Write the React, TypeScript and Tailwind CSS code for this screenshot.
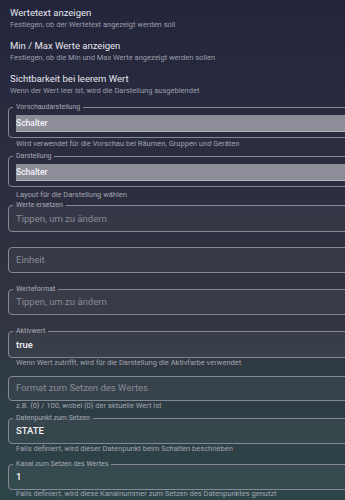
import React from "react";

function Setting({ title, sub }: { title: string; sub: string }) {
  return (
    <div className="h-[33px]">
      <div className="text-[9.5px] leading-[13px] text-[#e6e6ec]">{title}</div>
      <div className="text-[7.5px] leading-[12px] text-[#9c9eab]">{sub}</div>
    </div>
  );
}

function Legend({ children }: { children: React.ReactNode }) {
  return (
    <legend className="ml-[-3px] px-[3px] text-[7px] leading-[9px] text-[#a9abb7]">
      {children}
    </legend>
  );
}

function SelectField({ legend, value, cls }: { legend: string; value: string; cls: string }) {
  return (
    <fieldset className={`w-[360px] rounded-[4px] border border-[#858897] pl-[7px] pt-[3px] pb-[5px] ${cls}`}>
      <Legend>{legend}</Legend>
      <div className="h-[17px] bg-[#8d8d99] border-b border-[#b4b4bd] text-[8.5px] leading-[16px] font-medium text-[#f4f4f7]">
        {value}
      </div>
    </fieldset>
  );
}

function TextField({
  legend,
  value,
  placeholder,
  cls,
}: {
  legend: string;
  value?: string;
  placeholder?: string;
  cls: string;
}) {
  return (
    <fieldset className={`w-[360px] rounded-[4px] border border-[#858897] bg-white/[0.04] pl-[7px] pt-[2.5px] pb-[6px] ${cls}`}>
      <Legend>{legend}</Legend>
      {value ? (
        <div className="text-[9.5px] leading-[12px] font-medium text-[#f2f2f5]">{value}</div>
      ) : (
        <div className="text-[9.5px] leading-[12px] text-[#8a8c98]">{placeholder}</div>
      )}
    </fieldset>
  );
}

function PlainBox({ placeholder, cls }: { placeholder: string; cls: string }) {
  return (
    <div className={`w-[360px] rounded-[4px] border border-[#858897] bg-white/[0.04] pl-[7px] flex items-center ${cls}`}>
      <div className="text-[9.5px] leading-[12px] text-[#8a8c98]">{placeholder}</div>
    </div>
  );
}

function Helper({ text, cls }: { text: string; cls: string }) {
  return <div className={`pl-[8px] text-[7.5px] text-[#a2a4b0] ${cls}`}>{text}</div>;
}

export default function App() {
  return (
    <div className="w-[345px] h-[500px] overflow-hidden bg-[linear-gradient(180deg,#23253c_0%,#2c2e40_35%,#31333f_60%,#2c4648_100%)] font-['Roboto',sans-serif]">
      <div className="pl-[10px] pt-[6px]">
        <Setting title="Wertetext anzeigen" sub="Festlegen, ob der Wertetext angezeigt werden soll" />
        <Setting
          title="Min / Max Werte anzeigen"
          sub="Festlegen, ob die Min und Max Werte angezeigt werden sollen"
        />
        <Setting
          title="Sichtbarkeit bei leerem Wert"
          sub="Wenn der Wert leer ist, wird die Darstellung ausgeblendet"
        />
      </div>
      <div className="pl-[8px] mt-[-8px]">
        <SelectField legend="Vorschaudarstellung" value="Schalter" cls="mt-[6px]" />
        <Helper text="Wird verwendet für die Vorschau bei Räumen, Gruppen und Geräten" cls="mt-[1px] leading-[10px]" />
        <SelectField legend="Darstellung" value="Schalter" cls="mt-[3px]" />
        <Helper text="Layout für die Darstellung wählen" cls="mt-[3px] leading-[10px]" />
        <TextField legend="Werte ersetzen" placeholder="Tippen, um zu ändern" cls="mt-[1px]" />
        <PlainBox placeholder="Einheit" cls="mt-[15.5px] h-[26px]" />
        <TextField legend="Werteformat" placeholder="Tippen, um zu ändern" cls="mt-[11.5px]" />
        <TextField legend="Aktivwert" value="true" cls="mt-[12px]" />
        <Helper text="Wenn Wert zutrifft, wird für die Darstellung die Aktivfarbe verwendet" cls="mt-[1px] leading-[8px]" />
        <PlainBox placeholder="Format zum Setzen des Wertes" cls="mt-[9px] h-[25px]" />
        <Helper text="z.B. {0} / 100, wobei {0} der aktuelle Wert ist" cls="mt-[1px] leading-[8px]" />
        <TextField legend="Datenpunkt zum Setzen" value="STATE" cls="mt-[4px]" />
        <Helper text="Falls definiert, wird dieser Datenpunkt beim Schalten beschrieben" cls="mt-[1px] leading-[8px]" />
        <TextField legend="Kanal zum Setzen des Wertes" value="1" cls="mt-[6.5px]" />
        <Helper text="Falls definiert, wird diese Kanalnummer zum Setzen des Datenpunktes genutzt" cls="mt-0 leading-[8px]" />
      </div>
    </div>
  );
}
